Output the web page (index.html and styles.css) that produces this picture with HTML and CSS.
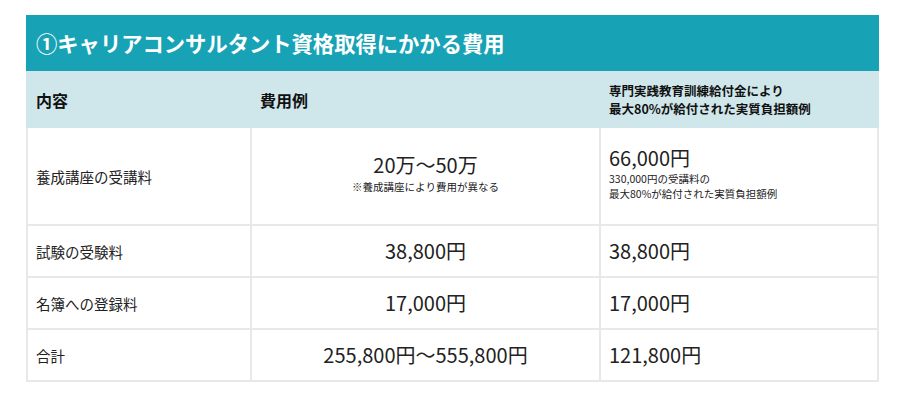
FILE: index.html
```html
<!DOCTYPE html>
<html lang="ja">
<head>
<meta charset="utf-8">
<link rel="stylesheet" href="styles.css">
</head>
<body>
<div class="table">
  <div class="title">①キャリアコンサルタント資格取得にかかる費用</div>
  <div class="row head">
    <div class="cell h1">内容</div>
    <div class="cell">費用例</div>
    <div class="cell small-head">専門実践教育訓練給付金により<br>最大80%が給付された実質負担額例</div>
  </div>
  <div class="row body tall">
    <div class="cell c1">養成講座の受講料</div>
    <div class="cell c2">
      <div class="stack center">
        <span class="amount">20万〜50万</span>
        <span class="note">※養成講座により費用が異なる</span>
      </div>
    </div>
    <div class="cell c3">
      <div class="stack">
        <span class="amount">66,000円</span>
        <span class="note2">330,000円の受講料の<br>最大80%が給付された実質負担額例</span>
      </div>
    </div>
  </div>
  <div class="row body">
    <div class="cell c1">試験の受験料</div>
    <div class="cell c2"><span class="amount">38,800円</span></div>
    <div class="cell c3"><span class="amount">38,800円</span></div>
  </div>
  <div class="row body">
    <div class="cell c1">名簿への登録料</div>
    <div class="cell c2"><span class="amount">17,000円</span></div>
    <div class="cell c3"><span class="amount">17,000円</span></div>
  </div>
  <div class="row body">
    <div class="cell c1">合計</div>
    <div class="cell c2"><span class="amount">255,800円〜555,800円</span></div>
    <div class="cell c3"><span class="amount">121,800円</span></div>
  </div>
</div>
</body>
</html>
```
FILE: styles.css
```css
* { box-sizing: border-box; }
body {
  margin: 0;
  background: #fff;
  font-family: "Noto Sans CJK JP", "Noto Sans", sans-serif;
  color: #222;
}
.table {
  width: 853px;
  margin: 15px 0 0 26px;
}
.title {
  height: 56px;
  background: #17a3b5;
  color: #fff;
  font-size: 21.3px;
  font-weight: 700;
  line-height: 56px;
  padding-left: 10px;
}
.row {
  display: grid;
  grid-template-columns: 226px 349px 278px;
}
.head {
  height: 57px;
  background: #cfe7eb;
  font-weight: 700;
  color: #111;
}
.head .cell {
  display: flex;
  align-items: center;
  padding-left: 8px;
  font-size: 16px;
}
.head .h1 { padding-left: 10px; }
.head .small-head {
  font-size: 12.5px;
  line-height: 18px;
}
.body {
  height: 52px;
}
.body.tall { height: 98px; }
.body .cell {
  display: flex;
  align-items: center;
  border-right: 2px solid #e8e8e8;
  border-bottom: 2px solid #e8e8e8;
  padding-left: 8px;
}
.body .c1 {
  border-left: 2px solid #e8e8e8;
  font-size: 14.5px;
}
.body .c2 {
  justify-content: center;
  padding-left: 0;
}
.stack {
  display: flex;
  flex-direction: column;
}
.stack.center { align-items: center; margin-top: -4px; }
.amount {
  font-size: 20px;
  line-height: 26px;
}
.note {
  font-size: 10.5px;
  line-height: 18px;
}
.note2 {
  font-size: 10.5px;
  line-height: 15px;
  margin-bottom: 2px;
}
.c3 .stack { margin-top: -4px; }
```
